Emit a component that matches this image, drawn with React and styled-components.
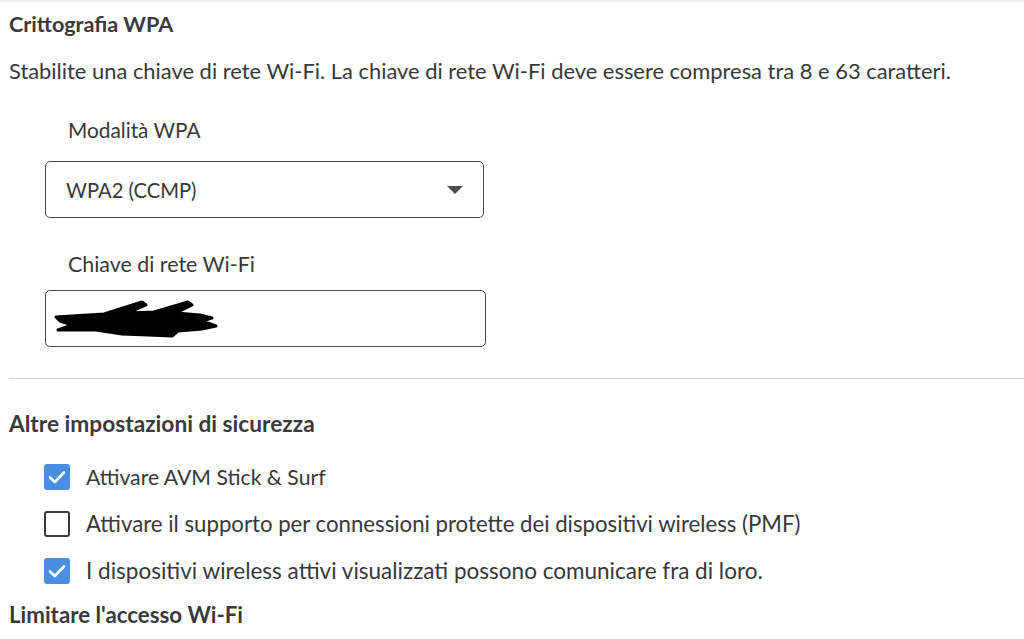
import React from "react";
import styled, { createGlobalStyle } from "styled-components";

const Global = createGlobalStyle`
  html, body { margin: 0; padding: 0; background: #fff; }
  body { font-family: Lato, "Noto Sans", sans-serif; color: #3a3a3c; }
  * { box-sizing: border-box; }
`;

const Page = styled.div`
  width: 1024px;
  height: 639px;
  overflow: hidden;
  border-top: 2px solid #f1f1f1;
  padding-left: 9px;
  display: flex;
  flex-direction: column;
`;

const Heading = styled.h2`
  margin: ${(p) => p.$top || 0}px 0 0 0;
  font-size: ${(p) => p.$size || 22}px;
  line-height: 26px;
  font-weight: 700;
  color: #3a3a3c;
`;

const Text = styled.p`
  margin: 21px 0 0 0;
  font-size: 21.9px;
  line-height: 26px;
  color: #38383a;
`;

const Field = styled.div`
  display: flex;
  flex-direction: column;
  margin-top: ${(p) => p.$top}px;
  padding-left: 36px;
`;

const Label = styled.label`
  font-size: ${(p) => p.$size || 21}px;
  line-height: 26px;
  padding-left: 23px;
  color: #38383a;
`;

const Box = styled.div`
  margin-top: ${(p) => p.$gap}px;
  width: ${(p) => p.$w}px;
  height: 57px;
  border: 1.5px solid #4a4a4a;
  border-radius: 5px;
  display: flex;
  align-items: center;
  justify-content: space-between;
  padding: 0 20px 0 20px;
  font-size: 20.2px;
  color: #38383a;
`;

const Arrow = styled.span`
  width: 0;
  height: 0;
  border-left: 8px solid transparent;
  border-right: 8px solid transparent;
  border-top: 8px solid #4d4d4f;
`;

const Scribble = styled.svg`
  margin-left: -14px;
  display: block;
`;

const Divider = styled.hr`
  margin: 31px 0 0 0;
  border: 0;
  border-top: 1.5px solid #d0d0d0;
  height: 0;
`;

const Options = styled.div`
  display: flex;
  flex-direction: column;
  gap: 21px;
  margin-top: 27px;
  padding-left: 35px;
`;

const Option = styled.label`
  display: flex;
  align-items: center;
  gap: 16px;
  font-size: ${(p) => p.$size}px;
  line-height: 26px;
  color: #38383a;
`;

const Check = styled.span`
  width: 26px;
  height: 26px;
  border-radius: 3px;
  flex: none;
  display: flex;
  align-items: center;
  justify-content: center;
  background: ${(p) => (p.$on ? "#4a8ee2" : "#fff")};
  border: ${(p) => (p.$on ? "none" : "2.5px solid #3a3a3c")};
`;

const CheckMark = () => (
  <svg width="18" height="14" viewBox="0 0 18 14">
    <path d="M2 7.5 L6.8 12 L16 2.5" fill="none" stroke="#fff" strokeWidth="2.6" strokeLinecap="round" strokeLinejoin="round" />
  </svg>
);

const options = [
  { on: true, size: 21.2, text: "Attivare AVM Stick & Surf" },
  { on: false, size: 22.2, text: "Attivare il supporto per connessioni protette dei dispositivi wireless (PMF)" },
  { on: true, size: 22.5, text: "I dispositivi wireless attivi visualizzati possono comunicare fra di loro." },
];

export default function App() {
  return (
    <Page>
      <Global />
      <Heading $top={9} $size={21.6}>Crittografia WPA</Heading>
      <Text>Stabilite una chiave di rete Wi-Fi. La chiave di rete Wi-Fi deve essere compresa tra 8 e 63 caratteri.</Text>
      <Field $top={33}>
        <Label $size={20.8}>Modalità WPA</Label>
        <Box $gap={18} $w={439}>
          <span>WPA2 (CCMP)</span>
          <Arrow />
        </Box>
      </Field>
      <Field $top={33}>
        <Label $size={21.4}>Chiave di rete Wi-Fi</Label>
        <Box $gap={13} $w={441}>
          <Scribble width="168" height="42" viewBox="0 0 168 42">
            <g fill="#000" stroke="#000" strokeLinecap="round" strokeLinejoin="round" strokeWidth="3">
              <path d="M4 19 L52 16 L90 4 L94 7 L76 15 L102 14 L136 4 L140 7 L124 15 L148 17 L160 20 L150 23 L164 28 L150 31 L126 33 L120 38 L96 37 L70 36 L44 32 L6 32 L20 27 L8 23 Z" />
            </g>
          </Scribble>
          <span />
        </Box>
      </Field>
      <Divider />
      <Heading $top={32} $size={22.7}>Altre impostazioni di sicurezza</Heading>
      <Options>
        {options.map((o, i) => (
          <Option key={i} $size={o.size}>
            <Check $on={o.on}>{o.on && <CheckMark />}</Check>
            {o.text}
          </Option>
        ))}
      </Options>
      <Heading $top={18} $size={22.3}>Limitare l'accesso Wi-Fi</Heading>
    </Page>
  );
}
